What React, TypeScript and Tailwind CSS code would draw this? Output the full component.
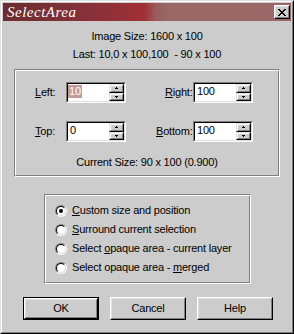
import React from 'react';

const closeGlyph = [
  [0, 1, 6, 7],
  [1, 2, 5, 6],
  [2, 3, 4, 5],
  [3, 4],
  [2, 3, 4, 5],
  [1, 2, 5, 6],
  [0, 1, 6, 7],
];

const CloseX = () => (
  <svg width="8" height="7" viewBox="0 0 8 7" shapeRendering="crispEdges">
    {closeGlyph.map((row, y) =>
      row.map(x => <rect key={`${x}-${y}`} x={x} y={y} width="1" height="1" fill="#000" />)
    )}
  </svg>
);

const Arrow = ({ down }: { down?: boolean }) => (
  <svg width="3" height="2" viewBox="0 0 3 2" shapeRendering="crispEdges">
    {down ? (
      <>
        <rect x="0" y="0" width="3" height="1" fill="#000" />
        <rect x="1" y="1" width="1" height="1" fill="#000" />
      </>
    ) : (
      <>
        <rect x="1" y="0" width="1" height="1" fill="#000" />
        <rect x="0" y="1" width="3" height="1" fill="#000" />
      </>
    )}
  </svg>
);

const SpinBtn = ({ down }: { down?: boolean }) => (
  <div className="flex-1 border border-t-[#dfdfdf] border-l-[#dfdfdf] border-b-black border-r-black">
    <div className="h-full border border-t-white border-l-white border-b-[#808080] border-r-[#808080] bg-[#cccccc] flex items-center justify-center">
      <Arrow down={down} />
    </div>
  </div>
);

const Field = ({ value, selected }: { value: string; selected?: boolean }) => (
  <div className="w-[60px] h-[21px] border border-t-[#808080] border-l-[#808080] border-b-white border-r-white">
    <div className="h-full flex border border-t-black border-l-black border-b-[#dfdfdf] border-r-[#dfdfdf] bg-white">
      <div className="flex-1 pt-[1px] leading-[13px]">
        {selected ? (
          <span className="bg-[#c59a9a] text-white pl-[1px] pr-[1px] inline-block">{value}</span>
        ) : (
          <span className="pl-[2px]">{value}</span>
        )}
      </div>
      <div className="w-[15px] flex flex-col">
        <SpinBtn />
        <SpinBtn down />
      </div>
    </div>
  </div>
);

const Radio = ({ checked, children }: { checked?: boolean; children: React.ReactNode }) => (
  <div className="h-[19px] flex items-center">
    <span className="w-[12px] h-[12px] rounded-full border border-t-[#808080] border-l-[#808080] border-b-white border-r-white">
      <span className="w-full h-full rounded-full border border-t-black border-l-black border-b-[#dfdfdf] border-r-[#dfdfdf] bg-white flex items-center justify-center">
        {checked && <span className="w-[4px] h-[4px] rounded-full bg-black" />}
      </span>
    </span>
    <span className="ml-[5px]">{children}</span>
  </div>
);

const Btn = ({ label, isDefault }: { label: string; isDefault?: boolean }) =>
  isDefault ? (
    <div className="w-[76px] h-[23px] border border-black">
      <div className="h-full border border-t-white border-l-white border-b-black border-r-black">
        <div className="h-full border border-t-[#dfdfdf] border-l-[#dfdfdf] border-b-[#808080] border-r-[#808080] flex items-center justify-center">
          {label}
        </div>
      </div>
    </div>
  ) : (
    <div className="w-[76px] h-[23px] border border-t-white border-l-white border-b-black border-r-black">
      <div className="h-full border border-t-[#dfdfdf] border-l-[#dfdfdf] border-b-[#808080] border-r-[#808080] flex items-center justify-center">
        {label}
      </div>
    </div>
  );

const Etched = ({ className, children }: { className: string; children: React.ReactNode }) => (
  <div className={`${className} border border-t-[#808080] border-l-[#808080] border-b-white border-r-white`}>
    <div className="border border-t-white border-l-white border-b-[#808080] border-r-[#808080]">
      {children}
    </div>
  </div>
);

export default function App() {
  return (
    <div className="w-[294px] h-[334px] bg-[#cccccc] text-black text-[11px] tracking-[-0.2px] font-['Liberation_Sans',Arial,sans-serif] border border-t-[#dfdfdf] border-l-[#dfdfdf] border-b-black border-r-black">
      <div className="h-full p-[1px] flex flex-col border border-t-white border-l-white border-b-[#808080] border-r-[#808080]">
        {/* title bar */}
        <div className="h-[18px] flex items-center justify-between bg-[linear-gradient(to_right,#6a2e30_0%,#88303a_30%,#a03036_49%,#9b5a5c_53%,#9a6666_57%,#9a6666_100%)]">
          <span className="pl-[4px] text-white italic text-[15px] tracking-[0.5px] font-['Liberation_Serif',serif]">SelectArea</span>
          <div className="mr-[1px] w-[16px] h-[14px] border border-t-white border-l-white border-b-black border-r-black">
            <div className="h-full border border-t-[#dfdfdf] border-l-[#dfdfdf] border-b-[#808080] border-r-[#808080] bg-[#cccccc] flex items-center justify-center">
              <CloseX />
            </div>
          </div>
        </div>

        <div className="mt-[6px] h-[18px] flex items-center justify-center">Image Size: 1600 x 100</div>
        <div className="h-[18px] flex items-center justify-center whitespace-pre">Last: 10,0 x 100,100  - 90 x 100</div>

        <Etched className="mt-[6px] ml-[11px] w-[266px]">
          <div className="pt-[11px] pb-[4px] pl-[19px]">
            <div className="h-[21px] flex items-center">
              <span className="w-[31px]"><u>L</u>eft:</span>
              <Field value="10" selected />
              <span className="w-[67px] pl-[39px]"><u>R</u>ight:</span>
              <Field value="100" />
            </div>
            <div className="mt-[18px] h-[21px] flex items-center">
              <span className="w-[31px]"><u>T</u>op:</span>
              <Field value="0" />
              <span className="w-[67px] pl-[30px]"><u>B</u>ottom:</span>
              <Field value="100" />
            </div>
          </div>
          <div className="mt-[7px] mb-[4px] h-[18px] flex items-center justify-center">Current Size: 90 x 100 (0.900)</div>
        </Etched>

        <Etched className="mt-[17px] ml-[41px] w-[207px]">
          <div className="pt-[5px] pb-[5px] pl-[9px]">
            <Radio checked><u>C</u>ustom size and position</Radio>
            <Radio><u>S</u>urround current selection</Radio>
            <Radio>Select <u>o</u>paque area - current layer</Radio>
            <Radio>Select opaque area - <u>m</u>erged</Radio>
          </div>
        </Etched>

        <div className="mt-[13px] ml-[20px] w-[250px] flex justify-between">
          <Btn label="OK" isDefault />
          <Btn label="Cancel" />
          <Btn label="Help" />
        </div>
      </div>
    </div>
  );
}
